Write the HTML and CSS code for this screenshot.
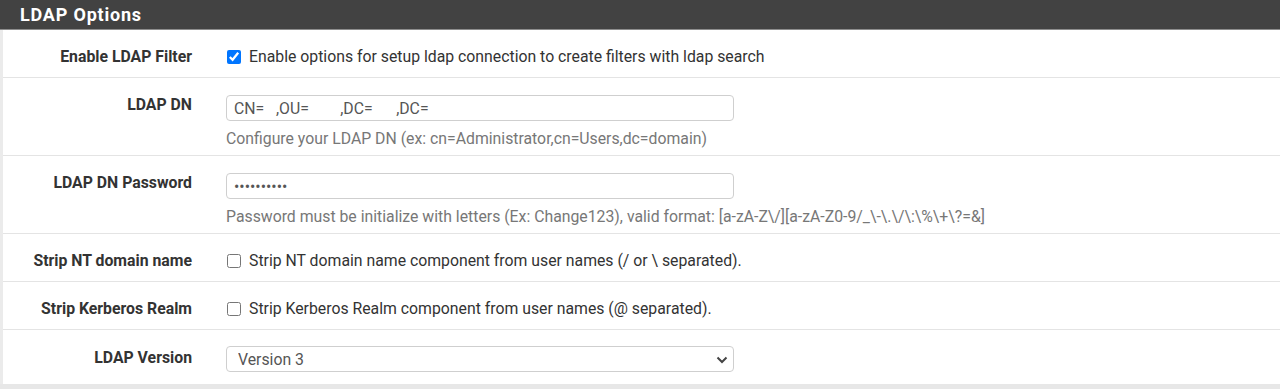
FILE: index.html
```html
<!DOCTYPE html>
<html lang="en">
<head>
    <meta charset="UTF-8">
    <title>LDAP Options</title>
    <link rel="stylesheet" href="styles.css">
</head>
<body>
    <div class="panel">
        <div class="panel-heading">
            <h2>LDAP Options</h2>
        </div>
        <div class="panel-body">
            <div class="form-group">
                <label class="control-label">Enable LDAP Filter</label>
                <div class="control">
                    <label class="checkbox"><input type="checkbox" checked> Enable options for setup ldap connection to create filters with ldap search</label>
                </div>
            </div>
            <div class="form-group">
                <label class="control-label">LDAP DN</label>
                <div class="control">
                    <input type="text" class="form-control" value="CN=   ,OU=        ,DC=      ,DC=">
                    <span class="help-block">Configure your LDAP DN (ex: cn=Administrator,cn=Users,dc=domain)</span>
                </div>
            </div>
            <div class="form-group">
                <label class="control-label">LDAP DN Password</label>
                <div class="control">
                    <input type="password" class="form-control" value="0123456789">
                    <span class="help-block">Password must be initialize with letters (Ex: Change123), valid format: [a-zA-Z\/][a-zA-Z0-9/_\-\.\/\:\%\+\?=&amp;]</span>
                </div>
            </div>
            <div class="form-group">
                <label class="control-label">Strip NT domain name</label>
                <div class="control">
                    <label class="checkbox"><input type="checkbox"> Strip NT domain name component from user names (/ or \ separated).</label>
                </div>
            </div>
            <div class="form-group">
                <label class="control-label">Strip Kerberos Realm</label>
                <div class="control">
                    <label class="checkbox"><input type="checkbox"> Strip Kerberos Realm component from user names (@ separated).</label>
                </div>
            </div>
            <div class="form-group last">
                <label class="control-label">LDAP Version</label>
                <div class="control">
                    <div class="select-wrap">
                        <select class="form-control">
                            <option>Version 3</option>
                            <option>Version 2</option>
                        </select>
                        <svg class="caret" width="12" height="8" viewBox="0 0 12 8"><path d="M1.5 1.5 L6 6 L10.5 1.5" fill="none" stroke="#444" stroke-width="2"/></svg>
                    </div>
                </div>
            </div>
        </div>
    </div>
</body>
</html>
```

FILE: styles.css
```css
body {
    margin: 0;
    background: #e7e7e7;
    font-family: Roboto, "Liberation Sans", Arial, sans-serif;
    font-size: 15.8px;
    color: #333;
}

.panel {
    background: #fff;
}

.panel-heading {
    background: #424242;
    height: 29px;
    border-bottom: 1px solid #8d8d8d;
    padding: 0 20px;
    display: flex;
    align-items: center;
}

.panel-heading h2 {
    margin: 0 0 1px;
    color: #fff;
    font-size: 18px;
    font-weight: bold;
    letter-spacing: 0.8px;
}

.panel-body {
    border-left: 3px solid #ebebeb;
}

.form-group {
    display: grid;
    grid-template-columns: 204px 1fr;
    padding: 17px 0 10px;
    border-bottom: 1px solid #e4e4e4;
    line-height: 20px;
}

.form-group.last {
    border-bottom: none;
    padding-top: 16px;
    padding-bottom: 12px;
}

.form-group.last .control-label {
    padding-top: 2px;
}

.control-label {
    text-align: right;
    font-weight: bold;
    padding-right: 15px;
    color: #333;
}

.control {
    padding-left: 19px;
    display: flex;
    flex-direction: column;
    align-items: flex-start;
}

.checkbox {
    display: flex;
    align-items: center;
    color: #333;
}

.checkbox input {
    width: 14px;
    height: 14px;
    margin: 0 8px 0 1px;
}

.form-control {
    box-sizing: border-box;
    width: 508px;
    height: 26px;
    padding: 0 7px;
    border: 1px solid #cfcfcf;
    border-radius: 4px;
    font-family: Roboto, "Liberation Sans", Arial, sans-serif;
    font-size: 15.8px;
    color: #555;
    white-space: pre;
    background: #fff;
}

.help-block {
    margin-top: 8px;
    margin-bottom: -4px;
    color: #777;
}

.select-wrap {
    position: relative;
}

.select-wrap select {
    appearance: none;
    -webkit-appearance: none;
    padding-left: 11px;
}

.select-wrap .caret {
    position: absolute;
    right: 6px;
    top: 10px;
}
```
